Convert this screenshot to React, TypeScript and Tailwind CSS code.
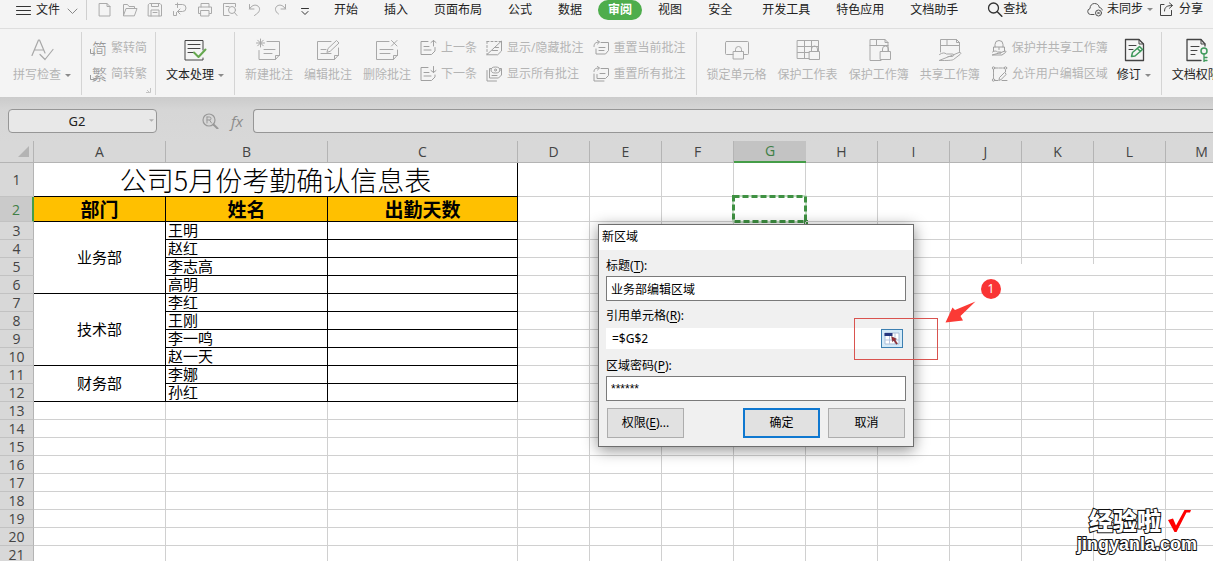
import React from 'react';

type IconProps = { children: React.ReactNode; className?: string; size?: 'sm' | 'md' | 'lg' };

function Icon({ children, className = '', size = 'lg' }: IconProps) {
  const dims = size === 'lg' ? 'h-6 w-7' : size === 'md' ? 'h-4 w-[17px]' : 'h-[15px] w-4';
  const box = size === 'lg' ? '0 0 28 24' : size === 'md' ? '0 0 17 16' : '0 0 16 15';
  return (
    <svg
      viewBox={box}
      aria-hidden="true"
      className={`${dims} shrink-0 fill-none stroke-current ${className}`}
      strokeWidth="1"
      strokeLinecap="round"
      strokeLinejoin="round"
    >
      {children}
    </svg>
  );
}

function Caret({ light = false }: { light?: boolean }) {
  return (
    <svg
      viewBox="0 0 6 3"
      aria-hidden="true"
      className={`h-[3px] shrink-0 ${light ? 'w-[5px] fill-[#b0b0b0]' : 'w-[6px] fill-[#8a8a8a]'}`}
    >
      <path d="M0 0h6L3 3z" />
    </svg>
  );
}

const quickIcons: { name: string; art: React.ReactNode }[] = [
  { name: '新建', art: <path d="M2.500 1.500h7.500l3 3v9.500h-10.500zM10 1.500v3h3" /> },
  { name: '打开', art: <path d="M1.500 13.500v-11h4l1.500 2h5.500v2M1.500 13.500l2.500-7h11l-2.500 7z" /> },
  {
    name: '保存',
    art: <path d="M1.500 2.500l1-1h10.500l1.500 1.500v11h-13zM4.500 1.500v3h7v-3M4 14v-6h8v6M6 10.500h4" />,
  },
  { name: '输出', art: <path d="M3.500 2.500h7a3.500 3.500 0 0 1 0 7h-5M8 7l-2.500 2.500L8 12M5.500 1v4.500M1.500 9.500v4h3v-3" /> },
  {
    name: '打印',
    art: <path d="M4 5v-3.500h8v3.500M3.500 11.500h-2v-6.500h13v6.500h-2M4 8.500h8v5.500h-8z" />,
  },
  {
    name: '打印预览',
    art: (
      <>
        <path d="M7 13.500h-5.500v-12h12v3M4 4.500h3" />
        <circle cx="10" cy="8" r="3.500" />
        <path d="M12.500 10.500l2.500 3" />
      </>
    ),
  },
  { name: '撤销', art: <path d="M2.500 2.500v4.500h4.500M2.500 7c2-3.500 5-4.500 7.500-3.500 3.500 1.500 3.500 6-.500 8.500l-2 1.500" /> },
  { name: '恢复', art: <path d="M13.500 2.500v4.500h-4.500M13.500 7c-2-3.500-5-4.500-7.500-3.500-3.500 1.500-3.500 6 .500 8.500" /> },
];

const mainTabs = ['开始', '插入', '页面布局', '公式', '数据', '审阅', '视图', '安全'];
const moreTabs = ['开发工具', '特色应用', '文档助手'];

function Tab({ label }: { label: string }) {
  const active = label === '审阅';
  return (
    <button
      type="button"
      className={
        active
          ? 'mx-[-10px] h-5 rounded-full bg-[#4ead4c] px-[10px] font-bold text-white'
          : 'h-5'
      }
    >
      {label}
    </button>
  );
}

function TopBar() {
  return (
    <header className="flex h-[29px] items-start border-b border-[#dedede] leading-5 whitespace-nowrap text-[#222]">
      <button type="button" className="flex h-5 items-center gap-1 pl-4 text-xs">
        <Icon size="sm" className="text-[#333]">
          <path d="M.5 3.500h14M.5 7.500h14M.5 11.500h14" />
        </Icon>
        文件
        <Icon size="sm" className="ml-px text-[#888]">
          <path d="M3 6l4.500 4.500L12 6" />
        </Icon>
      </button>
      <div className="ml-[5px] h-5 w-px shrink-0 bg-[#cfcfcf]" />
      <div className="ml-[5px] flex text-[#aaa]">
        {quickIcons.map((q) => (
          <button key={q.name} type="button" aria-label={q.name} className="flex h-[18px] w-[25px] items-center justify-center">
            <Icon size="sm">{q.art}</Icon>
          </button>
        ))}
        <button type="button" aria-label="自定义" className="flex h-5 w-[25px] items-center justify-center text-[#333]">
          <Icon size="sm">
            <path d="M4.500 5.500h7M5 8.500l3 3 3-3" />
          </Icon>
        </button>
      </div>
      <nav className="ml-[17px] flex gap-[26px] text-xs">
        {mainTabs.map((t) => (
          <Tab key={t} label={t} />
        ))}
      </nav>
      <nav className="ml-[30px] flex gap-[26px] text-xs">
        {moreTabs.map((t) => (
          <Tab key={t} label={t} />
        ))}
      </nav>
      <button type="button" className="ml-[29px] flex h-[18px] items-center text-xs">
        <Icon size="sm" className="text-[#333]">
          <circle cx="6.500" cy="6" r="5" strokeWidth="1.300" />
          <path d="M10.300 9.800l4.500 4.500" strokeWidth="1.500" />
        </Icon>
        查找
      </button>
      <div className="ml-auto flex h-[18px] items-center gap-[6px] pr-[10px] text-xs">
        <button type="button" className="flex items-center gap-1">
          <Icon size="sm" className="text-[#555]">
            <path d="M7 12.500h-3.500a3 3 0 0 1-.500-5.900C3 3.500 5 1.500 7.500 1.500s4.500 1.500 4.800 4c1.500.200 2.700 1 2.900 2.500" />
            <circle cx="11.500" cy="11" r="3" />
            <path d="M10.500 10l2 2M12.500 10l-2 2" />
          </Icon>
          未同步
          <Caret />
        </button>
        <button type="button" className="flex items-center gap-1">
          <Icon size="sm" className="text-[#444]">
            <path d="M5 2.500h-3.500v11h11v-5M5.500 9c0-4 2.500-5.500 7.500-5.500M10.500 1l3 2.500-3 2.700" />
          </Icon>
          分享
        </button>
      </div>
    </header>
  );
}

function BigButton({ label, art, on = false, caret = false }: { label: string; art: React.ReactNode; on?: boolean; caret?: boolean }) {
  return (
    <button
      type="button"
      className={`flex flex-col items-center gap-[3px] pt-[3px] text-xs leading-5 ${on ? 'text-[#222]' : 'text-[#b4b4b4]'}`}
    >
      <span className={on ? 'text-[#444]' : 'text-[#a8a8a8]'}>
        <Icon>{art}</Icon>
      </span>
      <span className="flex items-center gap-1">
        {label}
        {caret && <Caret />}
      </span>
    </button>
  );
}

function SmallButton({ label, art }: { label: string; art: React.ReactNode }) {
  return (
    <button type="button" className="flex h-[26px] items-center gap-1 text-xs leading-5 text-[#b4b4b4]">
      {typeof art === 'string' ? (
        <span className="relative block w-[17px] pl-[2px] text-[15px] leading-5 font-light text-[#8c8c8c]">
          {art}
          <svg viewBox="0 0 6 7" aria-hidden="true" className="absolute bottom-[2px] left-0 h-[7px] w-[6px] fill-none stroke-[#999]">
            <path d="M.5 0v4.500h4M3 2.500l2 2-2 2" className="fill-[#f4f4f4]" />
          </svg>
        </span>
      ) : (
        <span className="text-[#a0a0a0]">
          <Icon size="md">{art}</Icon>
        </span>
      )}
      {label}
    </button>
  );
}

function Stack({ children }: { children: React.ReactNode }) {
  return <div className="flex flex-col items-start">{children}</div>;
}

function Group({ children, last = false, tight = false }: { children: React.ReactNode; last?: boolean; tight?: boolean }) {
  return (
    <div
      className={`relative flex shrink-0 items-start gap-[11px] pt-[3px] ${tight ? 'px-2' : 'px-[10px]'} ${last ? '' : 'border-r border-[#d4d4d4]'}`}
    >
      {children}
    </div>
  );
}

const lock = (
  <>
    <rect x="15.500" y="13.500" width="10" height="8" fill="#f4f4f4" />
    <path d="M17.500 13.500v-2.500a3 3 0 0 1 6 0v2.500" />
  </>
);

function Ribbon() {
  return (
    <section className="flex h-[68px] overflow-hidden pt-[3px] pb-[2px] whitespace-nowrap">
      <Group>
        <div className="pl-[3px]">
          <BigButton
            label="拼写检查"
            caret
            art={<path d="M4 17.500L10.500 2h1L17 15M6.500 12h9M12 16.500l5 5 8-10" strokeWidth="1.200" />}
          />
        </div>
      </Group>
      <Group tight>
        <Stack>
          <SmallButton label="繁转简" art="简" />
          <SmallButton label="简转繁" art="繁" />
        </Stack>
        <svg viewBox="0 0 5 5" aria-hidden="true" className="absolute right-1 bottom-[2px] h-[5px] w-[5px] fill-none stroke-[#c4c4c4]">
          <path d="M0 4.500h4.500V0M1 2l2 2" />
        </svg>
      </Group>
      <Group>
        <BigButton
          label="文本处理"
          caret
          on
          art={
            <>
              <path d="M22 12V2.500h-18v19.500h18v-2" />
              <path d="M7 6.500h12M7 10.500h12M7 14.500h6" />
              <path d="M13 14.500l4.500 4.500 7-7.500" stroke="#65a84f" strokeWidth="2" />
            </>
          }
        />
      </Group>
      <Group>
        <BigButton
          label="新建批注"
          art={
            <>
              <path d="M12 3.500h12.500v13.500l-4 4.500h-16.500v-9M20.500 21.500v-4h4M9 11.500h11M9 15.500h8" />
              <path d="M5.500 1v8M1.500 5h8M2.700 2.200l5.600 5.600M8.300 2.200L2.700 7.800" />
            </>
          }
        />
        <BigButton
          label="编辑批注"
          art={
            <>
              <path d="M17 3.500h-13.500v18h17l4-4.500v-7M20.500 21.500v-4h4M7 11.500h5M7 15.500h10" />
              <path d="M13 14l1-3.500 8.500-8 2.500 2.500-8.500 8z" />
            </>
          }
        />
        <BigButton
          label="删除批注"
          art={
            <>
              <path d="M16 3.500h-12.500v18h17l4-4.500v-5M20.500 21.500v-4h4M7 11.500h13M7 15.500h10" />
              <path d="M18.500 2.500l5.500 5.500M24 2.500l-5.500 5.500" />
            </>
          }
        />
        <div className="-ml-[2px] flex gap-[9px]">
          <Stack>
            <SmallButton label="上一条" art={<path d="M8 1.500h-7v13h10.500l3.500-3.500v-3.500M4 6.500h5M4 10h7M13.500 6v-5.500M11 2.500l2.500-2 2.500 2" />} />
            <SmallButton label="下一条" art={<path d="M8 1.500h-7v13h10.500l3.500-3.500v-2M4 6.500h5M4 10h7M13.500 .500v6M11 4.500l2.500 2 2.500-2" />} />
          </Stack>
          <Stack>
            <SmallButton
              label="显示/隐藏批注"
              art={
                <>
                  <path d="M1 1.500h14M1 1.500v13" strokeDasharray="2 2" />
                  <path d="M1 14.500L15.500 1v10l-3.500 3.500zM6.500 10.500h5M9.500 7.500h3" />
                </>
              }
            />
            <SmallButton
              label="显示所有批注"
              art={
                <>
                  <path d="M5.500 2.500h-2v9.500h9l3-3v-6.500h-1.500M1 4.500v10.500h9.500M6 9.500h5" />
                  <ellipse cx="9.500" cy="4" rx="4.500" ry="3" />
                  <circle cx="9.500" cy="4" r="1" />
                </>
              }
            />
          </Stack>
          <Stack>
            <SmallButton label="重置当前批注" art={<path d="M8 2.500h7.500v8l-3 3.500h-9.500v-5M6 7.500h6M6 10.500h5M1 6.500c0-3 1.500-4.500 5-4.500M4.500 .500l2 1.500-2 2" />} />
            <SmallButton label="重置所有批注" art={<path d="M8 2.500h7.500v7l-3 3h-8.500v-4M7 7.500h5M1 8v7h10M1 5.500c0-2.500 1.500-3.500 5-3.500M4.500 .500l2 1.500-2 2" />} />
          </Stack>
        </div>
      </Group>
      <Group>
        <BigButton
          label="锁定单元格"
          art={
            <>
              <rect x="2.500" y="3.500" width="23" height="13" rx="1" />
              <path d="M12.500 13.500v-2a3 3 0 0 1 6 0v2" fill="#f4f4f4" />
              <rect x="10.500" y="13.500" width="10" height="7.500" fill="#f4f4f4" />
            </>
          }
        />
        <BigButton label="保护工作表" art={<><path d="M3.500 2.500h21v18h-21zM3.500 8.500h21M3.500 14.500h21M10.500 2.500v18M17.500 2.500v18" />{lock}</>} />
        <BigButton label="保护工作簿" art={<><path d="M16 22.500h-11v-21h15l3 3v10M5 7.500h18M11.500 1.500v6M20 1.500v3h3" />{lock}</>} />
        <BigButton
          label="共享工作簿"
          art={
            <>
              <path d="M4.500 14v-12.500h16l3 3v9M4.500 7.500h19M11 1.500v6M20.500 1.500v3h3" />
              <path d="M3.500 16.500c3-2 5-2 7-.500h6c2 0 1.500 2.500-.500 2.500h-4M17 17l6-2.500c2-.500 2.500 1 1 2l-6.500 5c-1.500 1-6 1-14 1z" />
            </>
          }
        />
        <div className="flex gap-[9px]">
          <Stack>
            <SmallButton
              label="保护并共享工作簿"
              art={
                <>
                  <path d="M4 7v-2.500a4 4 0 0 1 8 0v2.500M2.500 11v-4h11v4M8 7.500v2" />
                  <path d="M1.500 12c2-1.500 3.500-1.200 5 0h3c1 0 1 1.500-.500 1.500M10 12.500l4-1.500c1.500 0 1 1 .500 1.500l-3.500 2.500h-9.500z" />
                </>
              }
            />
            <SmallButton
              label="允许用户编辑区域"
              art={
                <>
                  <path d="M2.500 3.500v9M4 2h9M4 14.500h3" strokeDasharray="3 1" />
                  <circle cx="2.500" cy="2" r="1.200" />
                  <circle cx="14.500" cy="2" r="1.200" />
                  <circle cx="2.500" cy="14" r="1.200" />
                  <path d="M14.500 4v2M8 14l.500-2.500 5-5 1.800 1.800-5 5zM11 14.500h5" />
                </>
              }
            />
          </Stack>
          <BigButton
            label="修订"
            caret
            on
            art={
              <>
                <path d="M19 1.500h-13.500v21h18v-16.500z" strokeWidth="1.300" />
                <path d="M19 1.500v4.500h4.500M9 7.500h7M9 11.500h4" />
                <path d="M11.500 18.500l1-4 7-6 3 3-7.500 6.500zM17.500 10.500l3 3" stroke="#3f9a5c" strokeWidth="1.500" />
              </>
            }
          />
        </div>
      </Group>
      <Group last>
        <BigButton
          label="文档权限"
          on
          art={
            <>
              <path d="M19 22.500h-14v-21h14l4 4.500v2" strokeWidth="1.300" />
              <path d="M19 1.500v4.500h4M9 8.500h8M9 12.500h6M9 16.500h4" />
              <circle cx="22" cy="13" r="3" stroke="#3f9a5c" strokeWidth="1.500" />
              <path d="M22 16v8M22 19.500h3M22 22.500h3" stroke="#3f9a5c" strokeWidth="1.300" />
            </>
          }
        />
      </Group>
    </section>
  );
}

function FormulaBar() {
  return (
    <section className="flex h-11 items-center bg-linear-to-b from-[#cbcbcb] via-[#d6d6d6] via-30% to-[#d8d8d8] pt-[3px] pl-2">
      <div className="flex h-6 w-[149px] shrink-0 items-center rounded-[4px] border border-[#969696] bg-[#e8e8e8]">
        <input
          aria-label="名称框"
          defaultValue="G2"
          className="h-full w-full min-w-0 bg-transparent pr-1 text-center text-[13px] text-[#222] outline-none"
        />
        <button type="button" aria-label="展开名称" className="pr-[2px]">
          <Caret light />
        </button>
      </div>
      <button type="button" aria-label="查看公式" className="ml-[45px] text-[#999]">
        <Icon size="md">
          <circle cx="7" cy="7" r="6" strokeWidth="1.200" />
          <path d="M11.500 11.500l4 4" strokeWidth="2" />
          <path d="M5 4v6M5 4h2.500a1.500 1.500 0 0 1 0 3h-2.500M7.500 7l2 3" />
        </Icon>
      </button>
      <button
        type="button"
        className="ml-[12px] w-[17px] text-left font-['Open_Sans',sans-serif] text-[15px] leading-5 text-[#8c8c8c] italic"
      >
        fx
      </button>
      <input
        aria-label="编辑栏"
        className="ml-[5px] h-6 min-w-0 flex-1 rounded-l-[4px] border border-r-0 border-[#969696] bg-[#e8e8e8] px-2 text-[13px] outline-none"
      />
    </section>
  );
}

const columns = ['A', 'B', 'C', 'D', 'E', 'F', 'G', 'H', 'I', 'J', 'K', 'L', 'M'];
const freeColumns = columns.slice(3);
const names: Record<number, string> = {
  3: '王明', 4: '赵红', 5: '李志高', 6: '高明', 7: '李红', 8: '王刚', 9: '李一鸣', 10: '赵一天', 11: '李娜', 12: '孙红',
};
const departments: Record<number, { label: string; span: number }> = {
  3: { label: '业务部', span: 4 },
  7: { label: '技术部', span: 4 },
  11: { label: '财务部', span: 2 },
};
const rows = Array.from({ length: 21 }, (_, i) => i + 1);

function FreeCell({ row, col }: { row: number; col: string }) {
  const open = row >= 5 && row <= 7 && (col === 'J' || col === 'K');
  const selected = row === 2 && col === 'G';
  return (
    <td className={`relative border-b border-[#d0d0d0] p-0 ${open ? '' : 'border-r'}`}>
      {open && row === 5 && <span className="absolute top-0 right-0 h-[6px] w-px bg-[#d0d0d0]" />}
      {selected && (
        <svg aria-hidden="true" className="absolute -top-[2px] -left-[2px] h-[30px] w-[77px] fill-none">
          <rect x="1.500" y="1.500" width="72" height="25" stroke="#fff" strokeWidth="3" />
          <rect x="1" y="1" width="73" height="26" stroke="#3f9142" strokeWidth="1" opacity=".6" />
          <rect x="1.500" y="1.500" width="72" height="25" stroke="#3f9142" strokeWidth="3" strokeDasharray="6 3" />
          <path d="M72 25h4v4h-4z" className="fill-[#3f9142]" />
        </svg>
      )}
    </td>
  );
}

function Sheet() {
  return (
    <table className="w-max table-fixed border-separate border-spacing-0 bg-white font-['Liberation_Sans','Noto_Sans_CJK_SC',sans-serif]">
      <colgroup>
        <col className="w-[34px]" />
        <col className="w-[132px]" />
        <col className="w-[162px]" />
        <col className="w-[190px]" />
        {freeColumns.map((c) => (
          <col key={c} className="w-[72px]" />
        ))}
      </colgroup>
      <thead>
        <tr className="h-[22px] bg-[#d8d8d8] font-['Open_Sans',sans-serif] text-sm leading-5 text-[#444]">
          <th className="border-r border-b border-[#b4b4b4] p-0">
            <svg viewBox="0 0 11 11" aria-hidden="true" className="ml-[18px] h-[11px] w-[11px] fill-[#b4b4b4]">
              <path d="M11 0v11H0z" />
            </svg>
          </th>
          {columns.map((c) => (
            <th
              key={c}
              scope="col"
              className={
                c === 'G'
                  ? 'border-b-2 border-[#459d48] bg-[#c3c3c3] p-0 font-normal text-[#3f7f45]'
                  : 'border-r border-b border-[#b4b4b4] p-0 font-normal'
              }
            >
              {c}
            </th>
          ))}
        </tr>
      </thead>
      <tbody>
        {rows.map((r) => (
          <tr key={r} className={r === 1 ? 'h-[34px]' : r === 2 ? 'h-[25px]' : 'h-[18px]'}>
            <th
              scope="row"
              className={`border-b border-[#c2c2c2] p-0 font-['Open_Sans',sans-serif] text-sm leading-[17px] font-normal ${
                r === 2 ? 'border-r-2 border-r-[#459d48] bg-[#cacaca] text-[#3f7f45]' : 'border-r border-r-[#b4b4b4] bg-[#d8d8d8] text-[#444]'
              }`}
            >
              {r}
            </th>
            {r === 1 && (
              <td
                colSpan={3}
                className="border-r border-b border-black p-0 text-center font-['Noto_Sans_CJK_SC',sans-serif] text-[27px] leading-8 font-light text-black"
              >
                公司5月份考勤确认信息表
              </td>
            )}
            {r === 2 &&
              ['部门', '姓名', '出勤天数'].map((h) => (
                <td
                  key={h}
                  className="border-r border-b border-black bg-[#ffc000] p-0 text-center font-['Noto_Sans_CJK_SC',sans-serif] text-[19px] leading-6 font-bold text-black"
                >
                  {h}
                </td>
              ))}
            {departments[r] && (
              <td rowSpan={departments[r].span} className="border-r border-b border-black p-0 text-center text-[15px] leading-[17px] text-black">
                {departments[r].label}
              </td>
            )}
            {names[r] && (
              <>
                <td className="border-r border-b border-black p-0 pl-[2px] text-[15px] leading-[17px] text-black">{names[r]}</td>
                <td className="border-r border-b border-black p-0" />
              </>
            )}
            {r > 12 &&
              ['A', 'B', 'C'].map((c) => <td key={c} className="border-r border-b border-[#d0d0d0] p-0" />)}
            {freeColumns.map((c) => (
              <FreeCell key={c} row={r} col={c} />
            ))}
          </tr>
        ))}
      </tbody>
    </table>
  );
}

function FieldLabel({ htmlFor, text, hotkey }: { htmlFor: string; text: string; hotkey: string }) {
  return (
    <label htmlFor={htmlFor} className="block h-[19px] leading-[18px]">
      {text}(<span className="underline underline-offset-2">{hotkey}</span>):
    </label>
  );
}

function RegionDialog() {
  const field = 'block h-[25px] w-full border border-[#7a7a7a] bg-white px-1 outline-none';
  const button = 'h-[30px] w-[77px]';
  return (
    <div
      role="dialog"
      aria-label="新区域"
      className="absolute top-[83px] left-[598px] w-[316px] border border-[#6e6e6e] bg-[#f0f0f0] text-xs text-black shadow-[0_3px_14px_rgba(0,0,0,0.45)]"
    >
      <h2 className="h-[25px] bg-white pl-[3px] leading-[24px]">新区域</h2>
      <form className="flex flex-col gap-[6px] px-[7px] pt-[7px] pb-2" onSubmit={(e) => e.preventDefault()}>
        <div>
          <FieldLabel htmlFor="region-title" text="标题" hotkey="T" />
          <input id="region-title" defaultValue="业务部编辑区域" className={field} />
        </div>
        <div>
          <FieldLabel htmlFor="region-ref" text="引用单元格" hotkey="R" />
          <div className="flex h-[25px] items-center pr-[3px]">
            <input id="region-ref" defaultValue="=$G$2" className="h-[21px] min-w-0 flex-1 bg-white px-[6px] outline-none" />
            <button
              type="button"
              aria-label="选择区域"
              className="flex h-[19px] w-[22px] items-center justify-center border border-[#3c7fb1] bg-[#d5eaf8]"
            >
              <svg viewBox="0 0 16 14" aria-hidden="true" className="h-[14px] w-4">
                <path d="M1 1h14v11H1z" fill="#fff" stroke="#a9bdd8" />
                <path d="M.5 1h8v3h-8z" fill="#26377f" />
                <path d="M1 8h14M5.500 4v8M11 1v11" stroke="#b9c6e0" fill="none" />
                <path d="M7.500 4.500l5 2.500-1.500 .800 2.500 3.700-1.200 .800-2.500-3.800-1.300 1.200z" fill="#a02c34" stroke="#4d1c28" strokeWidth=".4" />
              </svg>
            </button>
          </div>
        </div>
        <div>
          <FieldLabel htmlFor="region-password" text="区域密码" hotkey="P" />
          <input id="region-password" defaultValue="******" className={`${field} font-['Liberation_Sans',sans-serif]`} />
        </div>
        <div className="flex gap-2 px-px pt-px">
          <button type="button" className={`${button} mr-auto border border-[#adadad] bg-[#e1e1e1]`}>
            权限(<span className="underline underline-offset-2">E</span>)...
          </button>
          <button type="submit" className={`${button} border-2 border-[#0f78d0] bg-[#e1e1e1]`}>
            确定
          </button>
          <button type="button" className={`${button} border border-[#adadad] bg-[#e1e1e1]`}>
            取消
          </button>
        </div>
      </form>
    </div>
  );
}

function Annotations() {
  return (
    <>
      <div className="absolute top-[177px] left-[854px] h-[42px] w-[84px] border border-[#d9534f]" />
      <svg viewBox="0 0 31 22" aria-hidden="true" className="absolute top-[160px] left-[945px] h-[22px] w-[31px] fill-[#fb3a35]">
        <path d="M30.500 .500L15.500 15l2.500 4.500L.5 21.500 7.500 6.500l2.500 2.500z" />
      </svg>
      <span className="absolute top-[138px] left-[981px] flex h-5 w-5 items-center justify-center rounded-full bg-[#f93434] text-xs text-white">
        1
      </span>
    </>
  );
}

function Watermark() {
  const outline = '[-webkit-text-stroke:2px_#111] [paint-order:stroke_fill]';
  return (
    <div className="absolute right-4 bottom-[6px] flex flex-col items-end text-white">
      <div className="flex items-center gap-[6px] pr-[6px]">
        <span className={`text-2xl leading-6 font-black ${outline}`}>经验啦</span>
        <svg viewBox="0 0 24 24" aria-hidden="true" className="h-6 w-6 fill-[#f00]">
          <path d="M1 11l5-1.500 3 7L17.500 1H24l-1 2.500h-3.500L9.500 23H7.500z" />
        </svg>
      </div>
      <span className={`font-['Liberation_Sans',sans-serif] text-lg leading-[22px] font-bold ${outline}`}>jingyanla.com</span>
    </div>
  );
}

export default function App() {
  return (
    <div className="flex h-screen flex-col overflow-hidden bg-[#f4f4f4] font-['Noto_Sans','Noto_Sans_CJK_SC',sans-serif] text-xs">
      <TopBar />
      <Ribbon />
      <FormulaBar />
      <main className="relative min-h-0 flex-1 overflow-hidden bg-white">
        <Sheet />
        <RegionDialog />
        <Annotations />
        <Watermark />
      </main>
    </div>
  );
}
